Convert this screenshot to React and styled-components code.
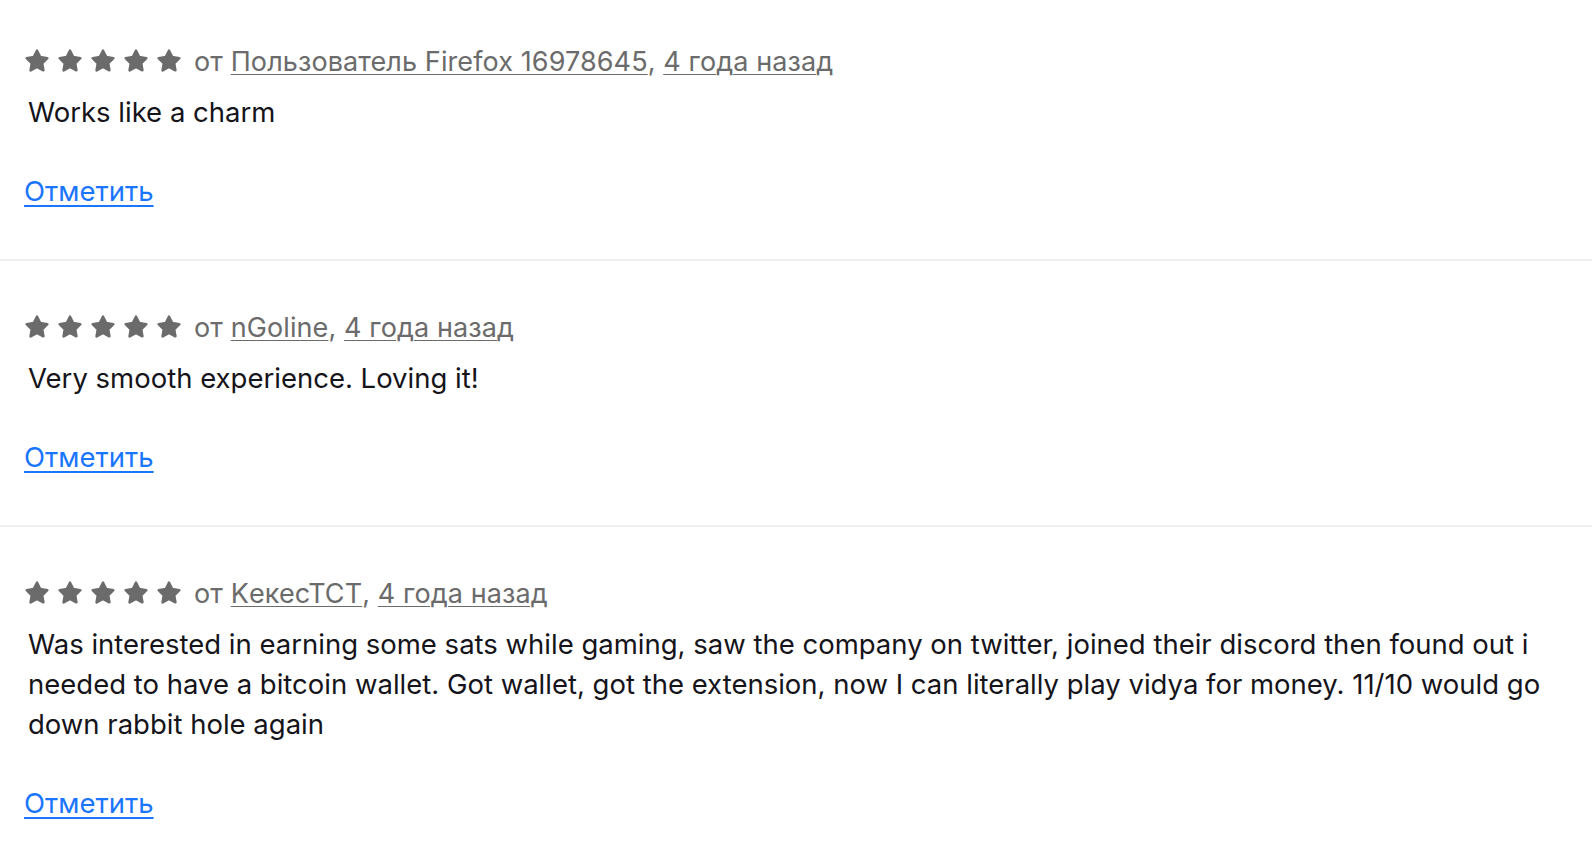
import styled, { createGlobalStyle } from "styled-components";

const GlobalStyle = createGlobalStyle`
  body {
    margin: 0;
    background: #ffffff;
    font-family: Inter, "Noto Sans", sans-serif;
    color: #15141a;
  }
`;

const List = styled.ul`
  list-style: none;
  margin: 0;
  padding: 0;
`;

const Review = styled.li`
  padding: 50px 24px 48px 24px;
  border-bottom: 2px solid #eef0f3;

  &:first-child {
    padding-top: 45px;
  }

  &:last-child {
    border-bottom: none;
  }
`;

const Meta = styled.div`
  display: flex;
  align-items: center;
  height: 32px;
  font-size: 27px;
  letter-spacing: 0.1px;
  color: #6b6b6b;
`;

const Stars = styled.div`
  display: flex;
  gap: 7px;
  margin-right: 12px;
`;

const MetaLink = styled.a`
  color: #6b6b6b;
  text-decoration: underline;
  text-underline-offset: 3px;
  text-decoration-thickness: 1px;
`;

const Body = styled.p`
  margin: 15px 0 0 0;
  padding-left: 4px;
  font-size: 27.5px;
  line-height: 40px;
  color: #15141a;
`;

const Flag = styled.a`
  display: inline-block;
  margin-top: 39px;
  font-size: 27.5px;
  line-height: 40px;
  color: #1a75ff;
  text-decoration: underline;
  text-underline-offset: 4px;
  text-decoration-thickness: 2px;
`;

const Star = () => (
  <svg width="26" height="26" viewBox="0 0 24 24">
    <polygon
      points="12,2.5 14.94,8.45 21.51,9.41 16.76,14.05 17.88,20.59 12,17.5 6.12,20.59 7.24,14.05 2.49,9.41 9.06,8.45"
      fill="#6b6b6b"
      stroke="#6b6b6b"
      strokeWidth="2.4"
      strokeLinejoin="round"
    />
  </svg>
);

const reviews = [
  {
    author: "Пользователь Firefox 16978645",
    text: "Works like a charm",
  },
  {
    author: "nGoline",
    text: "Very smooth experience. Loving it!",
  },
  {
    author: "KекесТСТ",
    text: "Was interested in earning some sats while gaming, saw the company on twitter, joined their discord then found out i needed to have a bitcoin wallet. Got wallet, got the extension, now I can literally play vidya for money. 11/10 would go down rabbit hole again",
  },
];

const App = () => {
  return (
    <>
      <GlobalStyle />
      <List>
        {reviews.map((r) => (
          <Review key={r.author}>
            <Meta>
              <Stars>
                {[0, 1, 2, 3, 4].map((i) => (
                  <Star key={i} />
                ))}
              </Stars>
              от&nbsp;<MetaLink href="#">{r.author}</MetaLink>,&nbsp;
              <MetaLink href="#">4 года назад</MetaLink>
            </Meta>
            <Body>{r.text}</Body>
            <Flag href="#">Отметить</Flag>
          </Review>
        ))}
      </List>
    </>
  );
};

export default App;
